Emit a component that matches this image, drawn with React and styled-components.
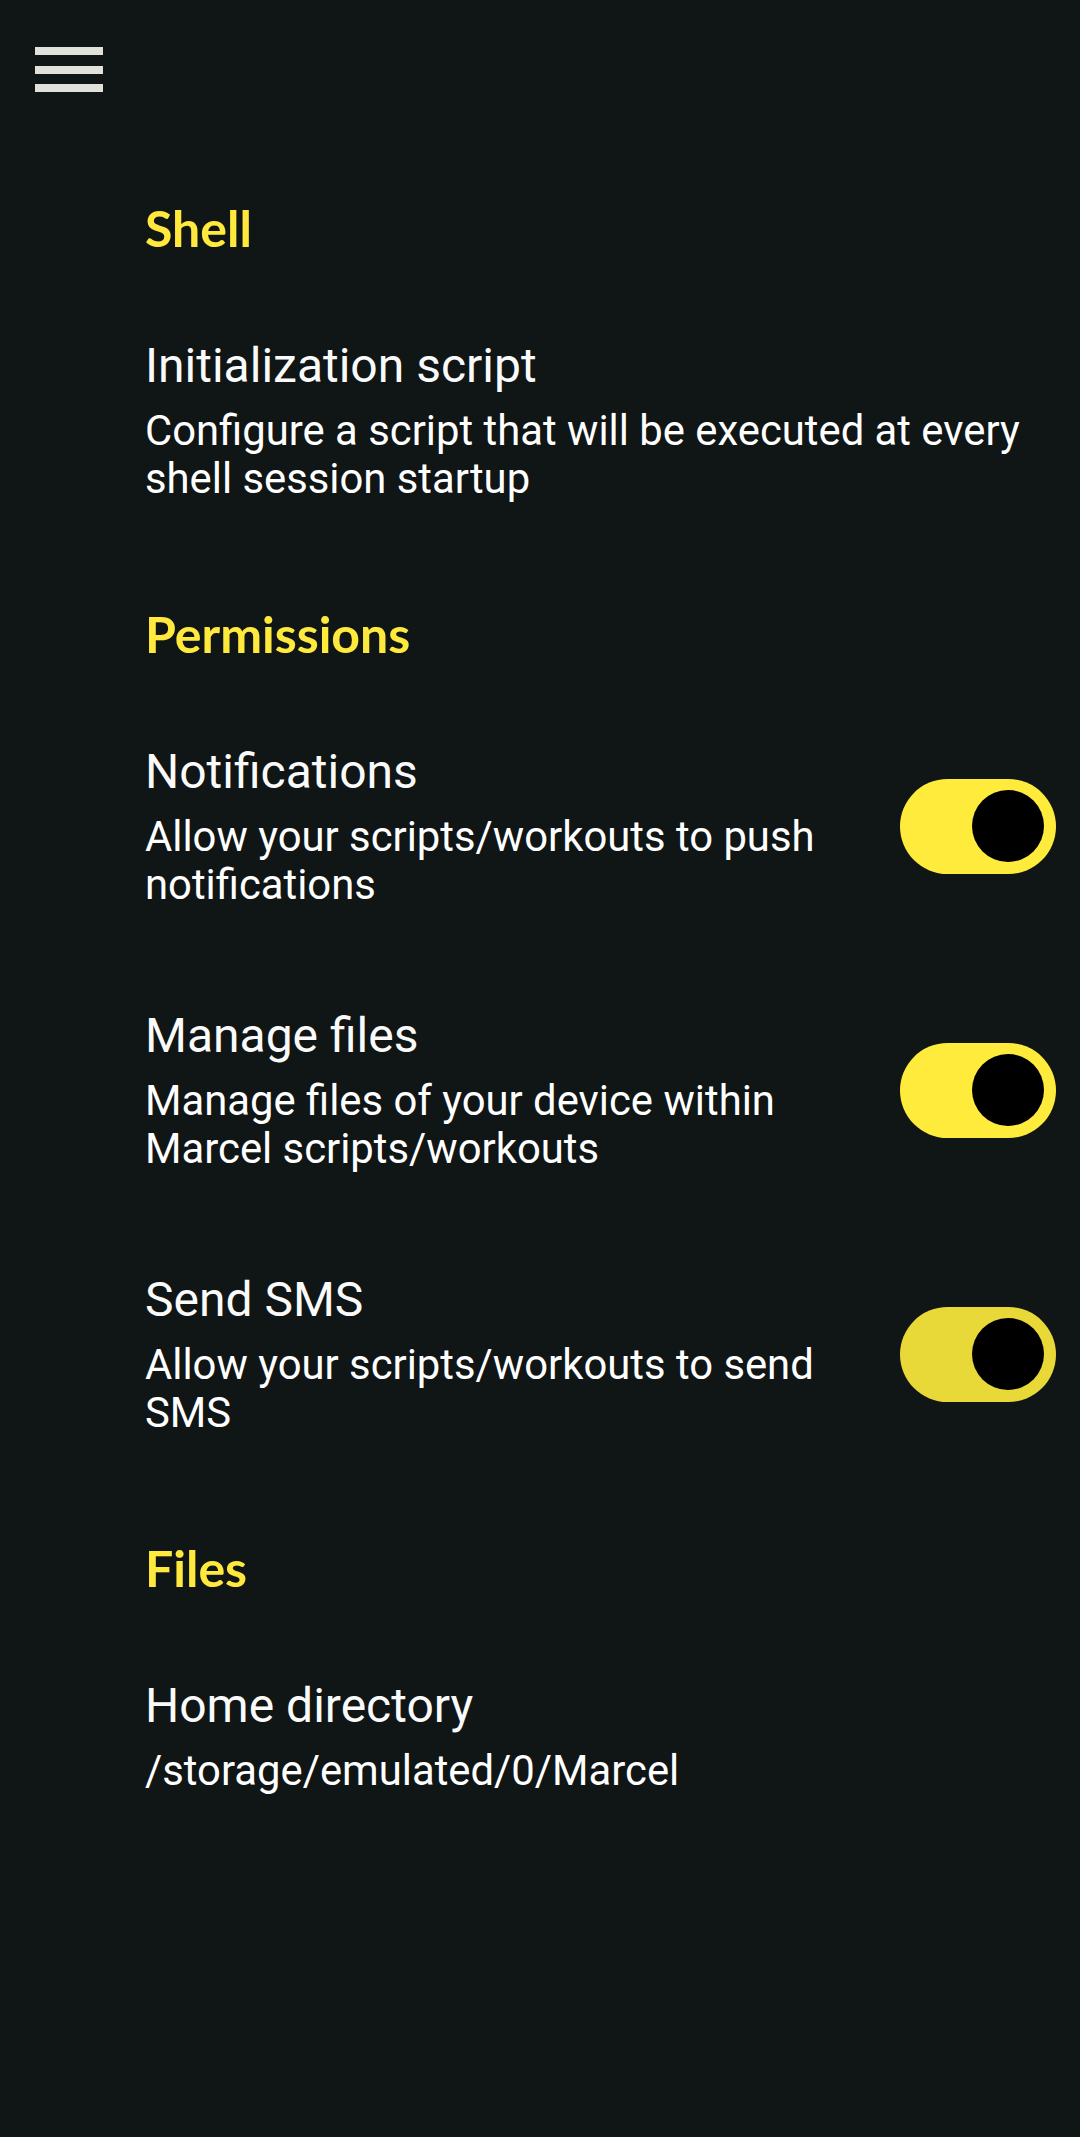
import styled, { createGlobalStyle } from "styled-components";

const GlobalStyle = createGlobalStyle`
  html, body {
    margin: 0;
    padding: 0;
    background-color: #101515;
  }

  body {
    font-family: Roboto, "Liberation Sans", sans-serif;
    -webkit-font-smoothing: antialiased;
  }
`;

const Screen = styled.div`
  background-color: #101515;
  min-height: 2137px;
  width: 1080px;
`;

const TopBar = styled.div`
  box-sizing: border-box;
  height: 146px;
  padding: 47px 0 0 35px;
`;

const MenuButton = styled.div`
  display: flex;
  flex-direction: column;
  gap: 10.5px;
  width: 68px;
`;

const MenuBar = styled.span`
  background-color: #e0e1da;
  display: block;
  height: 8px;
`;

const Content = styled.div`
  padding: 0 24px 0 145px;
`;

const Section = styled.section`
  padding-top: 54px;
`;

const SectionTitle = styled.h2`
  color: #ffe93d;
  font-family: Lato, "Open Sans", sans-serif;
  font-size: 50px;
  font-weight: 700;
  line-height: 56px;
  margin: 0 0 32px;
`;

const Row = styled.div`
  align-items: center;
  display: flex;
  padding: 49.5px 0;
`;

const Texts = styled.div`
  flex: 1;
  min-width: 0;
`;

const Title = styled.div`
  color: #fafafa;
  font-size: 48px;
  line-height: 56px;
`;

const Summary = styled.div`
  color: #ffffff;
  font-size: 41.8px;
  line-height: 48px;
  margin-top: 13px;
`;

const Track = styled.div`
  background-color: ${props => (props.$dim ? "#e8d838" : "#ffeb3b")};
  border-radius: 48px;
  box-sizing: border-box;
  display: flex;
  flex-shrink: 0;
  height: 95px;
  justify-content: flex-end;
  align-items: center;
  margin-left: 40px;
  padding-right: 12px;
  width: 156px;
`;

const Thumb = styled.span`
  background-color: #000000;
  border-radius: 50%;
  display: block;
  height: 72px;
  width: 72px;
`;

const Switch = ({ dim }) => (
  <Track $dim={dim}>
    <Thumb />
  </Track>
);

const sections = [
  {
    name: "Shell",
    items: [
      {
        title: "Initialization script",
        summary: "Configure a script that will be executed at every shell session startup",
      },
    ],
  },
  {
    name: "Permissions",
    items: [
      {
        title: "Notifications",
        summary: "Allow your scripts/workouts to push notifications",
        toggle: true,
      },
      {
        title: "Manage files",
        summary: "Manage files of your device within Marcel scripts/workouts",
        toggle: true,
      },
      {
        title: "Send SMS",
        summary: "Allow your scripts/workouts to send SMS",
        toggle: true,
        dim: true,
      },
    ],
  },
  {
    name: "Files",
    items: [
      {
        title: "Home directory",
        summary: "/storage/emulated/0/Marcel",
      },
    ],
  },
];

const App = () => (
  <Screen>
    <GlobalStyle />
    <TopBar>
      <MenuButton>
        <MenuBar />
        <MenuBar />
        <MenuBar />
      </MenuButton>
    </TopBar>
    <Content>
      {sections.map(section => (
        <Section key={section.name}>
          <SectionTitle>{section.name}</SectionTitle>
          {section.items.map(item => (
            <Row key={item.title}>
              <Texts>
                <Title>{item.title}</Title>
                <Summary>{item.summary}</Summary>
              </Texts>
              {item.toggle && <Switch dim={item.dim} />}
            </Row>
          ))}
        </Section>
      ))}
    </Content>
  </Screen>
);

export default App;
